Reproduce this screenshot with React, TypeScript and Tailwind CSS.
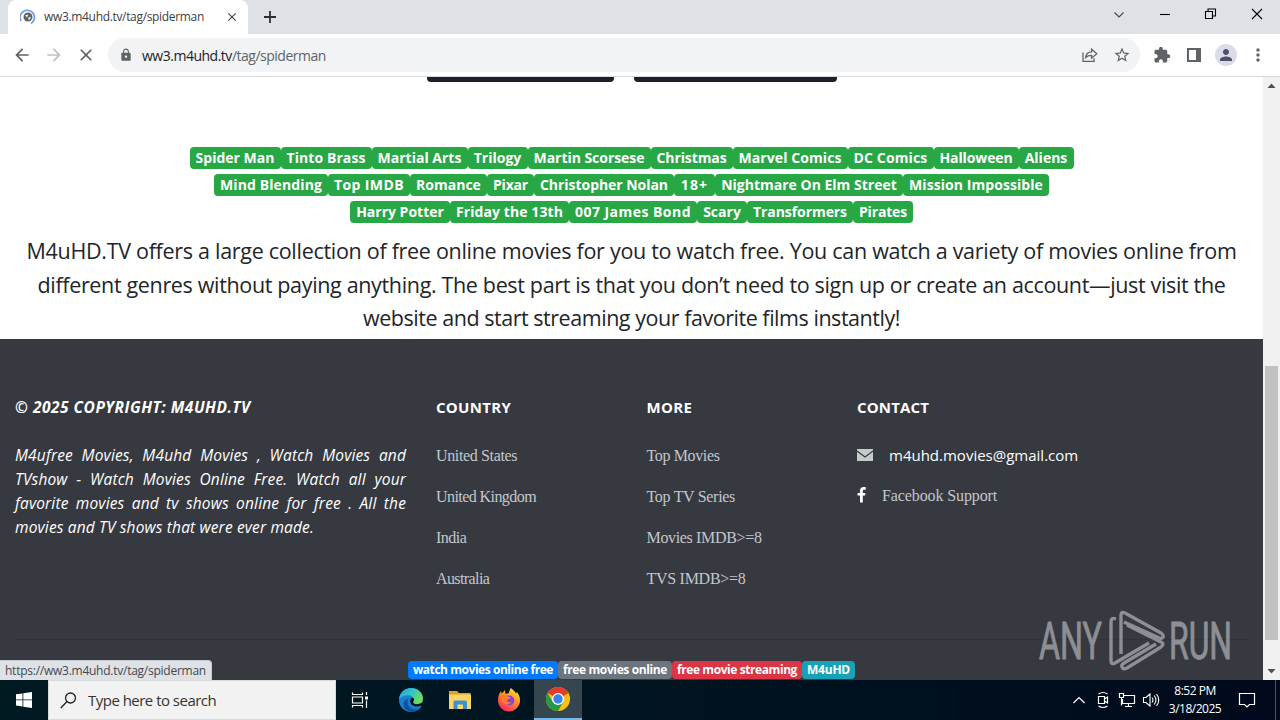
import type { ReactNode } from "react";
import {
  MdArrowBack,
  MdArrowForward,
  MdClose,
  MdExtension,
  MdLock,
  MdMoreVert,
  MdPerson,
  MdStarBorder,
} from "react-icons/md";

type Tag = { label: string; cls: string };

const TAG_ROWS: Tag[][] = [
  [
    { label: "Spider Man", cls: "w-[91px]" },
    { label: "Tinto Brass", cls: "w-[91px] tracking-[0.08px]" },
    { label: "Martial Arts", cls: "w-[96px]" },
    { label: "Trilogy", cls: "w-[60px]" },
    { label: "Martin Scorsese", cls: "w-[123px] tracking-[-0.04px]" },
    { label: "Christmas", cls: "w-[82px] tracking-[-0.1px]" },
    { label: "Marvel Comics", cls: "w-[115px] tracking-[0.08px]" },
    { label: "DC Comics", cls: "w-[86px] tracking-[0.14px]" },
    { label: "Halloween", cls: "w-[85px] tracking-[-0.12px]" },
    { label: "Aliens", cls: "w-[55px]" },
  ],
  [
    { label: "Mind Blending", cls: "w-[114px] tracking-[0.11px]" },
    { label: "Top IMDB", cls: "w-[82px] tracking-[0.39px]" },
    { label: "Romance", cls: "w-[77px]" },
    { label: "Pixar", cls: "w-[47px] tracking-[-0.19px]" },
    { label: "Christopher Nolan", cls: "w-[140px] tracking-[-0.04px]" },
    { label: "18+", cls: "w-[41px] tracking-[1.2px]" },
    { label: "Nightmare On Elm Street", cls: "w-[188px]" },
    { label: "Mission Impossible", cls: "w-[146px] tracking-[0.07px]" },
  ],
  [
    { label: "Harry Potter", cls: "w-[100px]" },
    { label: "Friday the 13th", cls: "w-[119px] tracking-[0.09px]" },
    { label: "007 James Bond", cls: "w-[128px] tracking-[0.46px]" },
    { label: "Scary", cls: "w-[50px]" },
    { label: "Transformers", cls: "w-[106px] tracking-[-0.07px]" },
    { label: "Pirates", cls: "w-[60px] tracking-[-0.17px]" },
  ],
];

const FOOTER_TAGS: Tag[] = [
  { label: "watch movies online free", cls: "w-[150px] bg-[#007bff] tracking-[-0.45px]" },
  { label: "free movies online", cls: "w-[114px] bg-[#6c757d] tracking-[-0.38px]" },
  { label: "free movie streaming", cls: "w-[130px] bg-[#dc3545] tracking-[-0.42px]" },
  { label: "M4uHD", cls: "w-[53px] bg-[#17a2b8] tracking-[-0.22px]" },
];

const COUNTRIES: Tag[] = [
  { label: "United States", cls: "tracking-[-0.36px]" },
  { label: "United Kingdom", cls: "tracking-[-0.57px]" },
  { label: "India", cls: "tracking-[-0.5px]" },
  { label: "Australia", cls: "tracking-[-0.6px]" },
];

const MORE: Tag[] = [
  { label: "Top Movies", cls: "tracking-[-0.36px]" },
  { label: "Top TV Series", cls: "tracking-[-0.31px]" },
  { label: "Movies IMDB>=8", cls: "tracking-[-0.34px]" },
  { label: "TVS IMDB>=8", cls: "tracking-[-0.28px]" },
];

function TabStrip() {
  return (
    <div className="flex h-[34px] shrink-0 bg-[#dee1e6]">
      <div className="ml-2 flex w-[240px] items-center rounded-t-lg bg-white pl-3 text-[12px] text-[#3c4043]">
        <svg width="16" height="16" viewBox="0 0 16 16" fill="none">
          <path d="M1 12A7.2 7.2 0 1 1 11 14.6" stroke="#6c9be0" strokeWidth="1.7" />
          <circle cx="8" cy="8" r="4.5" fill="#5f6368" />
          <path d="M5 6.5l2.2-1 1.2 1-1.6 1.8zM8.5 8.2l2.4-.3-.8 2.4-1.8.7z" fill="#e8eaed" />
        </svg>
        <span className="ml-2 w-[181px] whitespace-nowrap tracking-[-0.33px]">ww3.m4uhd.tv/tag/spiderman</span>
        <MdClose className="size-[14px] text-[#45494d]" />
      </div>
      <svg className="ml-[15px] mt-[10px]" width="14" height="14" viewBox="0 0 14 14" stroke="#2b2e33" strokeWidth="1.8">
        <path d="M7 1v12M1 7h12" />
      </svg>
      <div className="ml-auto flex h-7 text-black">
        <WindowButton>
          <path d="M2.5 5.5l4.500 4.500 4.500-4.500" stroke="#444" />
        </WindowButton>
        <WindowButton>
          <path d="M2 7.5h10" />
        </WindowButton>
        <WindowButton>
          <path d="M1.5 4.500h7v7h-7zM4 4.500v-2.500h7.500v7H9" />
        </WindowButton>
        <WindowButton>
          <path d="M2 2l10 10M12 2l-10 10" />
        </WindowButton>
      </div>
    </div>
  );
}

function WindowButton({ children }: { children: ReactNode }) {
  return (
    <div className="flex w-[46px] items-center justify-center">
      <svg width="15" height="15" viewBox="0 0 15 15" fill="none" stroke="currentColor" strokeWidth="1.1">
        {children}
      </svg>
    </div>
  );
}

function Toolbar() {
  return (
    <div className="flex h-[43px] shrink-0 items-center border-b border-[#d5d7da] bg-white pl-3 text-[#5f6368]">
      <MdArrowBack className="size-5" />
      <MdArrowForward className="ml-3 size-5 text-[#bdc1c6]" />
      <MdClose className="ml-3 size-5" />
      <div className="ml-3 flex h-[34px] w-[1032px] items-center rounded-full bg-[#f1f3f4] pl-[11px] pr-[9px]">
        <MdLock className="size-[14px]" />
        <span className="ml-[9px] whitespace-nowrap text-[14px] tracking-[-0.49px]">
          <span className="text-[#202124]">ww3.m4uhd.tv</span>/tag/spiderman
        </span>
        <svg className="ml-auto" width="16" height="16" viewBox="0 0 16 16" fill="none" stroke="currentColor" strokeWidth="1.3">
          <path d="M1 5.5v8.8h11v-3M3.6 10.5c.5-3.700 2.600-5.500 6-5.600V2.200L14.800 6.800 9.600 11.200V8.400c-2.700 0-4.400.500-6 2.100z" />
        </svg>
        <MdStarBorder className="ml-[15px] size-[18px]" />
      </div>
      <MdExtension className="ml-[13px] size-[18px]" />
      <svg className="ml-4" width="14" height="14" viewBox="0 0 14 14">
        <path d="M0 0h14v14H0zM2 2v10h7V2z" fill="currentColor" fillRule="evenodd" />
      </svg>
      <div className="ml-[14px] flex size-[22px] items-center justify-center rounded-full bg-[#dadce8]">
        <MdPerson className="size-[18px] text-[#4d5268]" />
      </div>
      <MdMoreVert className="ml-[11px] size-5" />
    </div>
  );
}

function FooterColumn({ title, links }: { title: string; links: Tag[] }) {
  return (
    <div className="px-[15px]">
      <h6 className="text-[15px] font-bold leading-[18px] tracking-[0.3px]">{title}</h6>
      <ul className="mt-[28px] flex flex-col gap-[17px] font-['Liberation_Serif',serif] text-[16px] leading-6 text-[#c3c7cb]">
        {links.map((l) => (
          <li key={l.label} className={l.cls}>
            {l.label}
          </li>
        ))}
      </ul>
    </div>
  );
}

function Footer() {
  return (
    <footer className="flex-1 bg-[#363940] text-white">
      <div className="grid h-[300px] grid-cols-[4fr_2fr_2fr_4fr] pt-[59px]">
        <div className="px-[15px] italic">
          <h6 className="whitespace-nowrap text-[15.500px] font-bold leading-[18px] tracking-[0.5px]">
            © 2025 COPYRIGHT: M4UHD.TV
          </h6>
          <div className="mt-[27px] text-[15.500px] leading-6 tracking-[0.15px]">
            <p className="whitespace-nowrap [text-align-last:justify]">M4ufree Movies, M4uhd Movies , Watch Movies and</p>
            <p className="whitespace-nowrap [text-align-last:justify]">TVshow - Watch Movies Online Free. Watch all your</p>
            <p className="whitespace-nowrap [text-align-last:justify]">favorite movies and tv shows online for free . All the</p>
            <p className="whitespace-nowrap">movies and TV shows that were ever made.</p>
          </div>
        </div>
        <FooterColumn title="COUNTRY" links={COUNTRIES} />
        <FooterColumn title="MORE" links={MORE} />
        <div className="px-[15px]">
          <h6 className="text-[15px] font-bold leading-[18px] tracking-[0.15px]">CONTACT</h6>
          <div className="mt-[27px] flex h-6 items-center text-[15px]">
            <svg width="16" height="12" viewBox="0 0 16 12">
              <path d="M0 0h16v12H0z" fill="#c5cbc8" />
              <path d="M0 2l8 6 8-6" fill="none" stroke="#363940" strokeWidth="1.100" />
            </svg>
            <span className="ml-4">m4uhd.movies@gmail.com</span>
          </div>
          <div className="mt-[17px] flex h-6 items-center">
            <svg className="-mt-[3px]" width="9" height="16" viewBox="0 0 9 16" fill="#fff">
              <path d="M8.700.200v2.500H7.200c-1.100 0-1.400.600-1.400 1.400v1.800h2.700l-.4 2.700H5.800V15.500H3V8.600H.600V5.900H3v-2C3 1.500 4.400.100 6.600.100c1 0 1.900.050 2.100.100z" />
            </svg>
            <span className="ml-4 font-['Liberation_Serif',serif] text-[16px] tracking-[-0.11px] text-[#c3c7cb]">
              Facebook Support
            </span>
          </div>
        </div>
      </div>
      <div className="mx-[15px] border-t border-[#303339]" />
      <div className="mt-[21px] flex justify-center text-[12px] font-bold">
        {FOOTER_TAGS.map((t) => (
          <span
            key={t.label}
            className={`flex h-[18px] items-center justify-center whitespace-nowrap rounded ${t.cls}`}
          >
            {t.label}
          </span>
        ))}
      </div>
    </footer>
  );
}

function Watermark() {
  return (
    <svg
      className="absolute right-[25px] top-[523px] overflow-visible opacity-55"
      width="220"
      height="80"
      viewBox="0 -8 220 80"
      fill="#d4d6da"
      stroke="#d4d6da"
      fontFamily="Roboto, sans-serif"
      fontSize="52"
    >
      <text x="4" y="51" textLength="63" lengthAdjust="spacingAndGlyphs" strokeWidth="0.900">
        ANY
      </text>
      <text x="134" y="51" textLength="63" lengthAdjust="spacingAndGlyphs" strokeWidth="0.900">
        RUN
      </text>
      <g fill="none" strokeWidth="3.400" strokeLinejoin="round" transform="translate(1 0)">
        <path d="M85 46V7q0-4 4-2l36 20q4 3 1 5-2 1-5-1L88 14" />
        <path d="M80 11q-5-2-5 3v39q0 4 4 2l34-20" />
        <path d="M91 17l34 17q4 2 0 5L91 60q-4 2-5-1-1-2 2-4l32-19" />
      </g>
    </svg>
  );
}

function Scrollbar() {
  return (
    <div className="flex w-[17px] shrink-0 flex-col items-center bg-[#f1f1f1]">
      <svg className="mt-[6px]" width="9" height="5" viewBox="0 0 9 5">
        <path d="M.5 5L4.500.500 8.500 5z" fill="#505050" />
      </svg>
      <div className="mt-[278px] h-[274px] w-[13px] bg-[#c1c1c1]" />
      <svg className="mt-[29px]" width="9" height="5" viewBox="0 0 9 5">
        <path d="M.500 0L4.500 4.500 8.500 0z" fill="#505050" />
      </svg>
    </div>
  );
}

function TaskIcon({ children }: { children: ReactNode }) {
  return <div className="flex w-[49px] items-center justify-center">{children}</div>;
}

function Taskbar() {
  return (
    <div className="flex h-10 shrink-0 bg-gradient-to-r from-[#001a22] via-[#00141f] to-[#000a1c] text-white">
      <div className="flex w-12 items-center justify-center">
        <svg width="16" height="16" viewBox="0 0 16 16" fill="#fff">
          <path d="M0 2.300l6.500-.900v6.100H0zM7.300 1.300L16 0v7.500H7.300zM0 8.300h6.500v6.200L0 13.600zM7.300 8.300H16V16l-8.700-1.300z" />
        </svg>
      </div>
      <div className="flex w-72 items-center border border-[#d9d9d9] bg-[#f2f2f2] pl-[11px] text-[15px] tracking-[-0.52px] text-[#333]">
        <svg width="17" height="17" viewBox="0 0 17 17" fill="none" stroke="#222" strokeWidth="1.300">
          <circle cx="10.500" cy="6" r="5" />
          <path d="M7 9.500L.8 16" />
        </svg>
        <span className="ml-[11px]">Type here to search</span>
      </div>
      <TaskIcon>
        <svg className="-ml-px" width="18" height="16" viewBox="0 0 18 16" fill="none" stroke="#fff" strokeWidth="1.200">
          <path d="M1.500.500v2h10v-2M1.500 15.500v-2h10v2M1.500 5h10v6h-10zM15.500 0v3M15.500 8.500V16" />
          <path d="M14 4.500h3v3h-3z" fill="#fff" stroke="none" />
        </svg>
      </TaskIcon>
      <div className="ml-px mr-px flex">
        <TaskIcon>
          <svg width="24" height="24" viewBox="0 0 24 24">
            <defs>
              <linearGradient id="edgeTop" x1="0" y1="0" x2="1" y2="0.500">
                <stop offset="0" stopColor="#259ce0" />
                <stop offset="0.550" stopColor="#36c7c4" />
                <stop offset="1" stopColor="#6fdc55" />
              </linearGradient>
            </defs>
            <path d="M0 12C0 5.400 5.400 0 12 0s12 5.400 12 12l-2 7c-2.500 3.200-6 5-10 5C5.400 24 0 18.600 0 12z" fill="#1b7fd0" />
            <path d="M0 11.500C.500 5 5.500 0 12 0c7 0 12 5 12 10.500 0 3.500-2.800 6-6 6-2.500 0-4-1-4-1.800 0-.700 1-1.200 1-3 0-2.400-2.300-4.500-6-4.500-4 0-7.500 1.800-9 4.300z" fill="url(#edgeTop)" />
            <path d="M9 11c-1.800 5.500 2 10.500 7 10.500 2.500 0 4.700-.700 6.300-2.300C20 22.300 16.500 24 12.500 24 8 23.500 4.500 20 4.500 16c0-2.500 2-4.500 4.500-5z" fill="#124f9f" />
            <path d="M12.500 10c-2 2-1.600 5.800 1 7.300 3 1.700 7.500 1.700 10.500-.8V14c-3 2.700-9.500 3-10 .200-.100-.800 1-1.300 1-3 0-.700-.900-1.200-1.500-1.200z" fill="#001720" />
          </svg>
        </TaskIcon>
        <TaskIcon>
          <svg width="22" height="20" viewBox="0 0 22 20">
            <path d="M0 1h8l2 2h11.500v5H0z" fill="#e2a029" />
            <path d="M0 4.500h22V19H0z" fill="#fbd568" />
            <path d="M4.500 19v-7q0-1.500 1.500-1.500h10.500q1.500 0 1.500 1.500v7h-4v-4.500H8.500V19z" fill="#3f91cc" />
          </svg>
        </TaskIcon>
        <TaskIcon>
          <svg width="24" height="24" viewBox="0 0 24 24">
            <defs>
              <linearGradient id="fox" x1="0.800" y1="0" x2="0.200" y2="1">
                <stop offset="0" stopColor="#ffe53b" />
                <stop offset="0.450" stopColor="#ff8a2a" />
                <stop offset="1" stopColor="#f5245f" />
              </linearGradient>
            </defs>
            <path d="M14 0c1.500 2 4 3 5 5.500l1-1.500c2 2.500 3 5 3 8.500C23 18.500 18 23.500 12 23.500S1 18.500 1 12.500C1 8.500 2 5.500 4 3l.800 2.500L8 2l.5 4L12 5c0-2 1-4 2-5z" fill="url(#fox)" />
            <circle cx="12.300" cy="12.500" r="5" fill="#8243d8" />
            <path d="M5 8c2-1.500 4-1.500 6 .500l3 1c-1 2-3.500 1.500-4 3 0 2 3 2.500 5 1-1 3-7 4.500-9.500.500C4.500 12 4 10 5 8z" fill="#ff7b31" />
          </svg>
        </TaskIcon>
      </div>
      <div className="flex w-12 items-center justify-center border-b-2 border-[#76b9ed] bg-[#36464f]">
        <svg width="24" height="24" viewBox="0 0 24 24">
          <circle cx="12" cy="12" r="12" fill="#fbc116" />
          <path d="M12 12L1.600 6A12 12 0 0 1 22.400 6z" fill="#e33b2e" />
          <path d="M1.600 6A12 12 0 0 0 12 24l5.200-9L12 12l-5.200 3z" fill="#279847" />
          <circle cx="12" cy="12" r="6" fill="#fff" />
          <circle cx="12" cy="12" r="4.700" fill="#3b82ee" />
        </svg>
      </div>
      <div className="ml-auto flex items-center">
        <svg width="14" height="14" viewBox="0 0 14 14" fill="none" stroke="#fff" strokeWidth="1.200">
          <path d="M1.500 10L7 4.500l5.500 5.500" />
        </svg>
        <svg className="ml-[10px]" width="14" height="18" viewBox="0 0 14 18" fill="none" stroke="#fff" strokeWidth="1.200">
          <path d="M2.500 5.500h6v7h-6zM8.500 8l3-2v6l-3-2M2.500 3q4.500-3 9 0M2.500 15q4.500 3 9 0" />
        </svg>
        <svg className="ml-2" width="18" height="16" viewBox="0 0 18 16" fill="none" stroke="#fff" strokeWidth="1.200">
          <path d="M6 3.500h10.500v8H4.500V7M10.500 11.500v3M7 14.500h7M1.500 1.500h4v4h-4zM3.500 5.500v8" />
        </svg>
        <svg className="ml-[6px]" width="18" height="16" viewBox="0 0 18 16" fill="none" stroke="#fff" strokeWidth="1.100">
          <path d="M1.500 5.500h2.500L8 2v12l-4-3.500H1.500zM10 5.500q2 2.500 0 5M12.200 3.500q3.500 4.500 0 9M14.500 2q4.500 6 0 12" />
        </svg>
        <div className="ml-[7px] flex w-[56px] flex-col items-center whitespace-nowrap text-[12px] leading-[18px] tracking-[-0.5px]">
          <span>8:52 PM</span>
          <span>3/18/2025</span>
        </div>
        <svg className="ml-[15px]" width="18" height="18" viewBox="0 0 18 18" fill="none" stroke="#fff" strokeWidth="1.200">
          <path d="M1.500 2.500h15v11h-5L9 16l-2.500-2.500h-5z" />
        </svg>
        <div className="ml-[19px] mr-1 h-10 w-px bg-[#4b5562]" />
      </div>
    </div>
  );
}

export default function App() {
  return (
    <div className="flex h-[720px] w-[1280px] flex-col overflow-hidden bg-white font-['Open_Sans','Noto_Sans',sans-serif]">
      <TabStrip />
      <Toolbar />
      <div className="relative flex h-[603px] shrink-0 overflow-hidden">
        <main className="flex w-[1263px] flex-col">
          <div className="ml-[427px] flex gap-5">
            <div className="h-[5px] w-[187px] rounded-b bg-[#1c2028]" />
            <div className="h-[5px] w-[203px] rounded-b bg-[#1c2028]" />
          </div>
          <div className="mt-[65px] flex flex-col gap-[5px]">
            {TAG_ROWS.map((row, i) => (
              <div key={i} className="flex justify-center text-[14px] font-bold text-white">
                {row.map((t) => (
                  <span
                    key={t.label}
                    className={`flex h-[22px] items-center justify-center whitespace-nowrap rounded bg-[#28a745] pb-[2px] ${t.cls}`}
                  >
                    {t.label}
                  </span>
                ))}
              </div>
            ))}
          </div>
          <div className="mt-[11px] h-[105px] whitespace-nowrap text-center text-[21.5px] leading-[33.600px] text-[#212529]">
            <p className="tracking-[-0.293px]">
              M4uHD.TV offers a large collection of free online movies for you to watch free. You can watch a variety of
              movies online from
            </p>
            <p className="tracking-[-0.342px]">
              different genres without paying anything. The best part is that you don’t need to sign up or create an
              account—just visit the
            </p>
            <p className="tracking-[-0.462px]">website and start streaming your favorite films instantly!</p>
          </div>
          <Footer />
        </main>
        <Scrollbar />
        <Watermark />
        <div className="absolute bottom-0 left-0 h-5 w-[212px] whitespace-nowrap rounded-tr border-r border-t border-[#c4c8cf] bg-[#dee1e6] pl-[5px] text-[12px] leading-[19px] tracking-[-0.25px] text-[#45494e]">
          https://ww3.m4uhd.tv/tag/spiderman
        </div>
      </div>
      <Taskbar />
    </div>
  );
}
